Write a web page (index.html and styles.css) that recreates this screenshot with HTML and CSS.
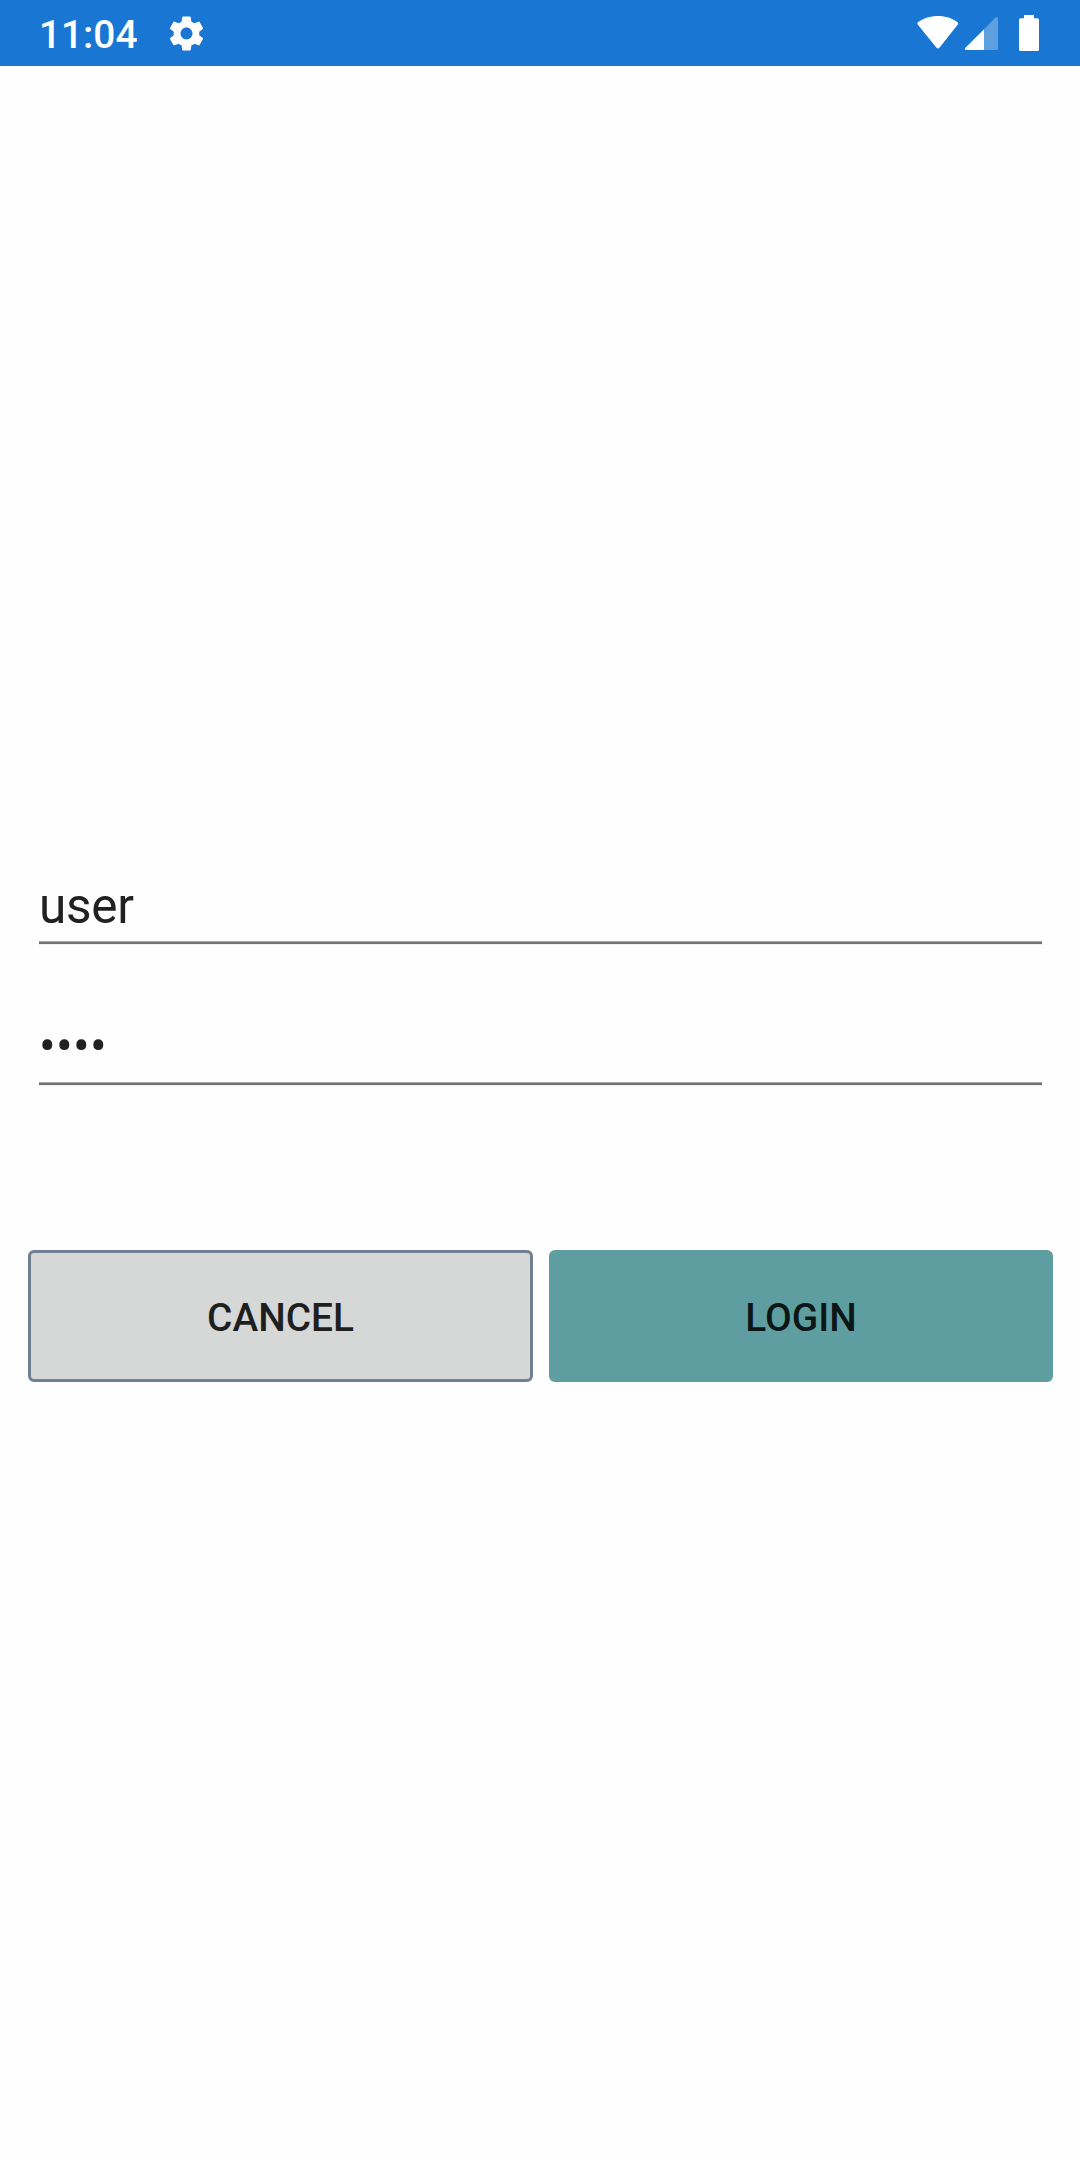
FILE: index.html
```html
<!DOCTYPE html>
<html lang="en">
<head>
<meta charset="utf-8">
<title>Login</title>
<link rel="stylesheet" href="styles.css">
</head>
<body>
<header class="status-bar">
  <span class="clock">11:04</span>
  <svg class="gear" viewBox="0 0 24 24"><path fill-rule="evenodd" d="M19.43 12.98c.04-.32.07-.64.07-.98s-.03-.66-.07-.98l2.11-1.65c.19-.15.24-.42.12-.64l-2-3.46c-.12-.22-.39-.3-.61-.22l-2.49 1c-.52-.4-1.08-.73-1.69-.98l-.38-2.65C14.46 2.18 14.25 2 14 2h-4c-.25 0-.46.18-.49.42l-.38 2.65c-.61.25-1.17.59-1.69.98l-2.49-1c-.23-.09-.49 0-.61.22l-2 3.46c-.13.22-.07.49.12.64l2.11 1.65c-.04.32-.07.65-.07.98s.03.66.07.98l-2.11 1.65c-.19.15-.24.42-.12.64l2 3.46c.12.22.39.3.61.22l2.49-1c.52.4 1.08.73 1.69.98l.38 2.65c.03.24.24.42.49.42h4c.25 0 .46-.18.49-.42l.38-2.65c.61-.25 1.17-.59 1.69-.98l2.49 1c.23.09.49 0 .61-.22l2-3.46c.12-.22.07-.49-.12-.64l-2.11-1.65zM12 15.5c-1.93 0-3.5-1.57-3.5-3.5s1.57-3.5 3.5-3.5 3.500 1.57 3.500 3.500-1.57 3.500-3.500 3.500z"/></svg>
  <svg class="wifi" viewBox="0 0 43 34"><path d="M21.500 0C13.500 0 6.500 2.300 1.100 6.300Q-.4 7.500.8 9.100L20 32.600Q21.500 34.200 23 32.600L41.700 9.100Q42.900 7.500 41.400 6.300C36 2.300 29.500 0 21.500 0Z"/></svg>
  <svg class="signal" viewBox="0 0 33 33"><path class="faint" d="M19 12.300 30.200.8Q33-1.200 33 2V31.500Q33 33 31.500 33H19Z"/><path d="M19 12.300V33H1.200Q-.8 32.600.4 30.800Z"/></svg>
  <svg class="battery" viewBox="0 0 20 36"><path d="M5 0H15V3.300H18.500Q20 3.300 20 4.800V34.500Q20 36 18.500 36H1.500Q0 36 0 34.500V4.800Q0 3.300 1.500 3.300H5Z"/></svg>
</header>
<main class="login">
  <div class="field">user</div>
  <div class="field password">••••</div>
  <div class="actions">
    <button class="button cancel">CANCEL</button>
    <button class="button submit">LOGIN</button>
  </div>
</main>
</body>
</html>
```
FILE: styles.css
```css
* {
  box-sizing: border-box;
}

body {
  margin: 0;
  min-height: 2160px;
  background: #fefefe;
  font-family: Roboto, sans-serif;
  color: #212121;
}

.status-bar {
  display: flex;
  align-items: flex-start;
  height: 66px;
  padding-right: 41px;
  background: #1976d2;
  color: #fff;
  fill: #fff;
}

.clock {
  width: 127px;
  margin: 12px 0 0 39px;
  font-size: 38.8px;
  font-weight: 500;
  line-height: 46px;
}

.gear {
  width: 41px;
  height: 41px;
  margin-top: 13px;
}

.wifi {
  width: 42px;
  height: 33px;
  margin: 15.500px 6.500px 0 auto;
}

.signal {
  width: 33px;
  height: 33px;
  margin: 17px 21px 0 0;
}

.faint {
  fill-opacity: 0.3;
}

.battery {
  width: 20px;
  height: 36px;
  margin-top: 15px;
}

.login {
  padding: 804px 27px 0 28px;
}

.field {
  height: 141px;
  margin: 0 11px;
  padding-top: 7px;
  font-size: 49.5px;
  line-height: 58px;
  letter-spacing: -0.3px;
  background: linear-gradient(#a8a8a8 1px, #737373 1px, #737373 3px, #eee 3px) 0 71px / 100% 4px no-repeat;
}

.password {
  padding-top: 6px;
  letter-spacing: 0.3px;
}

.actions {
  display: flex;
  gap: 16px;
  margin-top: 98px;
}

.button {
  height: 132px;
  padding: 4px 0 0;
  border: 0;
  border-radius: 6px;
  font: 500 38.8px/46px Roboto, sans-serif;
}

.cancel {
  width: 505px;
  border: 3px solid #708090;
  background: #d6d7d7;
  color: #1e1f1f;
}

.submit {
  width: 504px;
  background: #5f9ea0;
  color: #0d1616;
}
```
